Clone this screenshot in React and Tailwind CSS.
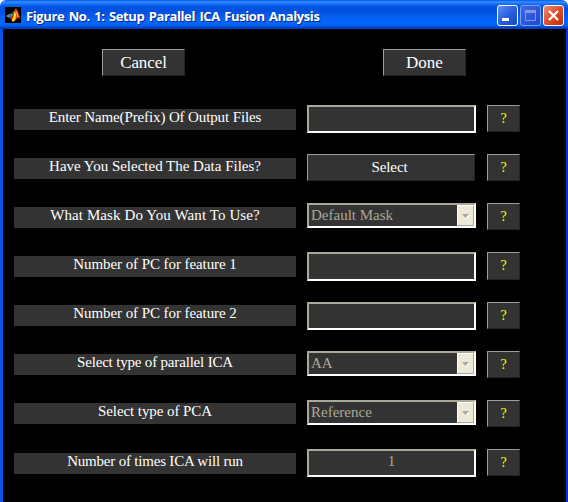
const rows = [
  { label: "Enter Name(Prefix) Of Output Files", track: "tracking-[-0.12px]", kind: "edit", h: "h-[49px]", box: "h-[28px]", pad: "mt-1" },
  { label: "Have You Selected The Data Files?", track: "tracking-[-0.01px]", kind: "button", value: "Select", h: "h-[49px]", box: "h-[27px]", pad: "mt-1" },
  { label: "What Mask Do You Want To Use?", track: "tracking-[0.1px]", kind: "select", value: "Default Mask", h: "h-[49px]", box: "h-[25px]", pad: "mt-1" },
  { label: "Number of PC for feature 1", track: "tracking-[-0.08px]", kind: "edit", h: "h-[50px]", box: "h-[29px]", pad: "mt-1", help: "h-[28px]" },
  { label: "Number of PC for feature 2", track: "tracking-[-0.08px]", kind: "edit", h: "h-[49px]", box: "h-[28px]", pad: "mt-[3px]" },
  { label: "Select type of parallel ICA", track: "tracking-[-0.18px]", kind: "select", value: "AA", h: "h-[49px]", box: "h-[25px]", pad: "mt-[3px]" },
  { label: "Select type of PCA", track: "tracking-[-0.07px]", kind: "select", value: "Reference", h: "h-[49px]", box: "h-[25px]", pad: "mt-[3px]" },
  { label: "Number of times ICA will run", track: "tracking-[-0.2px]", kind: "edit", value: "1", h: "h-[49px]", box: "h-[28px]", pad: "mt-1" },
];

const raised = "border border-t-[#9c9c9c] border-l-[#9c9c9c] border-b-[#242424] border-r-[#242424] bg-[#333333]";
const sunken = "border-2 border-t-[#aca899] border-l-[#aca899] border-b-white border-r-[#fffff4] bg-[#333333]";

function MatlabIcon() {
  return (
    <svg width="16" height="16" viewBox="0 0 16 16" className="shrink-0 bg-black">
      <path d="M0.500 9 4 7 7 6.500 9.500 3 8.500 8 6 10.500 4 11z" fill="#4c8488" />
      <path d="M5 11 7.500 9 9 6 10 1.500h1.500l2 4.500 2 6-2.500-1.500L9.500 14.500 7 14.500 6 12z" fill="#e0260c" />
      <path d="M10 3 8.500 9.500 7 13v1.500h1.500L10.500 12 11 8z" fill="#f8e42c" />
      <path d="M11 2.500 13 7l.5 3-1.500.5z" fill="#f4cc22" />
    </svg>
  );
}

function CaptionButtons() {
  return (
    <div className="mt-[5px] mr-1 ml-auto flex gap-[2px]">
      <div className="h-[21px] w-[21px] rounded-[3px] border border-white bg-linear-to-br from-[#638cf0] via-[#2860e2] to-[#1646c0]">
        <svg width="19" height="19" viewBox="0 0 19 19"><path d="M4 12h7v3H4z" fill="#fff" /></svg>
      </div>
      <div className="h-[21px] w-[21px] rounded-[3px] border border-[#7d9cf0] bg-linear-to-br from-[#3f6ae5] to-[#1948ca]">
        <svg width="19" height="19" viewBox="0 0 19 19">
          <path d="M4.500 5h10v9.500h-10z" fill="none" stroke="#8297e4" />
          <path d="M4 4h11v3H4z" fill="#8297e4" />
        </svg>
      </div>
      <div className="h-[21px] w-[21px] rounded-[3px] border border-white bg-linear-to-br from-[#ed8b70] via-[#df4d25] to-[#bd2e0b]">
        <svg width="19" height="19" viewBox="0 0 19 19"><path d="m5 5 9 9m0-9-9 9" fill="none" stroke="#fff" strokeWidth="2.300" /></svg>
      </div>
    </div>
  );
}

function TitleBar() {
  return (
    <header className="flex h-[29px] w-full rounded-t-[6px] bg-[linear-gradient(to_bottom,#0058e6_0px,#3a8cff_2px,#1170f5_4px,#0354e3_7px,#0250dc_11px,#0462f7_19px,#0366ff_25px,#0449d2_27px,#0238b5_29px)]">
      <div className="mt-[7px] ml-[5px]"><MatlabIcon /></div>
      <h1 className="mt-[7px] ml-[5px] font-['Open_Sans','Noto_Sans',sans-serif] text-[13px] leading-[18px] font-bold tracking-[-0.4px] [word-spacing:1.5px] whitespace-nowrap text-white [text-shadow:1px_1px_0_#0a2b86]">
        Figure No. 1: Setup Parallel ICA Fusion Analysis
      </h1>
      <CaptionButtons />
    </header>
  );
}

function Control({ row }) {
  if (row.kind === "button") {
    return <button className={`${raised} ${row.box} flex w-[168px] items-center justify-center pr-[3px] text-[15px] leading-none tracking-[-0.1px] text-white`}>{row.value}</button>;
  }
  if (row.kind === "select") {
    return (
      <div className={`${sunken} ${row.box} flex items-center justify-between pl-[2px] text-[15px] leading-[21px] text-[#aca899]`}>
        <span>{row.value}</span>
        <span className="flex h-[21px] w-[17px] items-center justify-center border border-t-white border-l-white border-r-[#aca899] border-b-[#aca899] bg-[#ece9d8]">
          <svg width="9" height="6" viewBox="0 0 9 6"><path d="M2 2h7L5.500 6z" fill="#fff" /><path d="M1 1h7L4.500 5z" fill="#aca899" /></svg>
        </span>
      </div>
    );
  }
  return <div className={`${sunken} ${row.box} flex justify-center text-[15px] leading-[21px] text-[#aca899]`}>{row.value}</div>;
}

export default function App() {
  return (
    <div className="h-[502px] w-[568px] overflow-hidden bg-white font-['Liberation_Serif',serif]">
      <TitleBar />
      <main className="h-[473px] overflow-hidden border-r-2 border-l-[3px] border-r-[#0036d8] border-l-[#0855e8] bg-black pt-5">
        <div className="ml-[99px] flex gap-[198px]">
          <button className={`${raised} h-[27px] w-[83px] text-[17px] leading-[25px] tracking-[-0.1px] text-white`}>Cancel</button>
          <button className={`${raised} h-[27px] w-[83px] text-[17px] leading-[25px] text-white`}>Done</button>
        </div>
        <div className="mt-[29px] ml-[11px]">
          {rows.map((row) => (
            <div key={row.label} className={`${row.h} flex items-start`}>
              <div className={`${row.pad} ${row.track} h-[21px] w-[282px] bg-[#333333] text-center text-[15px] leading-[17px] whitespace-nowrap text-white`}>{row.label}</div>
              <div className="ml-[11px] w-[169px]"><Control row={row} /></div>
              <button className={`${raised} ${row.help || "h-[27px]"} ml-[11px] w-[33px] text-[14px] leading-none text-[#ffff00]`}>?</button>
            </div>
          ))}
        </div>
      </main>
    </div>
  );
}
